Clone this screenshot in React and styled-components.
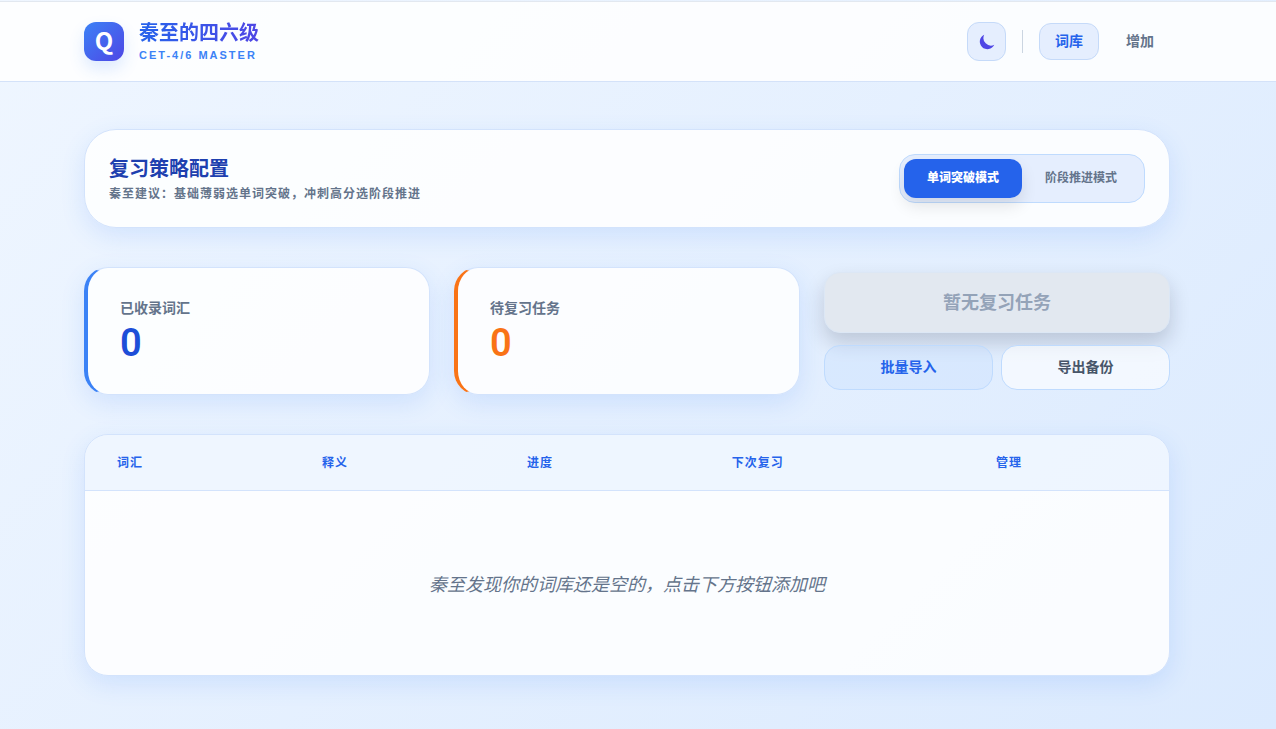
import React from "react";
import styled, { createGlobalStyle } from "styled-components";

const GlobalStyle = createGlobalStyle`
  *, *::before, *::after { box-sizing: border-box; }
  body {
    margin: 0;
    font-family: Roboto, "Noto Sans CJK SC", sans-serif;
    color: #1e293b;
    background: #e4effe;
  }
  button { font-family: inherit; cursor: pointer; }
  h1, h2, p { margin: 0; }
`;

const Page = styled.div`
  min-height: 100vh;
  padding-top: 1px;
  background: linear-gradient(135deg, #eff6ff, #dbeafe);
`;

const Container = styled.div`
  max-width: 1150px;
  margin: 0 auto;
  padding: 0 32px;
`;

const Gutter = styled.div`
  padding-right: 22px;
`;

const Header = styled.header`
  background: rgba(255, 255, 255, 0.85);
  border-top: 1px solid #e2e8f0;
  border-bottom: 1px solid #d4e2f9;
`;

const HeaderRow = styled(Container)`
  display: flex;
  align-items: center;
  justify-content: space-between;
  padding-top: 18px;
  padding-bottom: 18px;
`;

const Brand = styled.div`
  display: flex;
  align-items: center;
  gap: 15px;
`;

const Logo = styled.div`
  display: grid;
  place-items: center;
  width: 40px;
  height: 39px;
  padding-bottom: 4px;
  border-radius: 12px;
  background: linear-gradient(135deg, #3b82f6, #4f46e5);
  box-shadow: 0 8px 16px rgba(59, 130, 246, 0.16);
  color: #fff;
  font-family: "Noto Sans CJK SC", sans-serif;
  font-size: 24px;
  line-height: 24px;
  font-weight: 700;
`;

const BrandName = styled.h1`
  width: fit-content;
  font-size: 20px;
  line-height: 26px;
  font-weight: 700;
  background: linear-gradient(90deg, #2563eb, #4f46e5);
  background-clip: text;
  color: transparent;
`;

const BrandSub = styled.p`
  font-family: "Liberation Sans", "Noto Sans CJK SC", sans-serif;
  font-size: 11px;
  line-height: 15px;
  padding-top: 2px;
  font-weight: 700;
  letter-spacing: 2px;
  color: #3b82f6;
`;

const Nav = styled.nav`
  display: flex;
  align-items: center;
  gap: 16px;
`;

const ThemeButton = styled.button`
  display: grid;
  place-items: center;
  width: 39px;
  height: 39px;
  padding: 0;
  border: 1px solid #c5daf9;
  border-radius: 12px;
  background: #e5eefe;
  color: #4f46e5;
`;

const Divider = styled.span`
  width: 1px;
  height: 23px;
  background: #cbd5e1;
`;

const Tabs = styled.div`
  display: flex;
  gap: 11px;
`;

const TabButton = styled.button`
  height: 37px;
  padding: 0 15px 2px;
  border: 1px solid ${(p) => (p.$active ? "#c5daf9" : "transparent")};
  border-radius: 12px;
  background: ${(p) => (p.$active ? "#e5eefe" : "transparent")};
  color: ${(p) => (p.$active ? "#2563eb" : "#64748b")};
  font-size: 14px;
  line-height: 20px;
  font-weight: 700;
`;

const Main = styled(Container).attrs({ as: "main" })`
  display: grid;
  gap: 39px;
  padding-top: 47px;
  padding-bottom: 40px;
`;

const Card = styled.section`
  border: 1px solid #d3e3fc;
  border-radius: 24px;
  background: rgba(255, 255, 255, 0.85);
  box-shadow: 0 8px 24px rgba(59, 130, 246, 0.14);
`;

const StrategyCard = styled(Card)`
  display: flex;
  align-items: center;
  justify-content: space-between;
  padding: 24px;
  border-radius: 32px;
`;

const StrategyTitle = styled.h2`
  font-size: 20px;
  line-height: 28px;
  font-weight: 700;
  color: #1e40af;
`;

const StrategyHint = styled.p`
  font-size: 12px;
  line-height: 18px;
  padding-top: 2px;
  font-weight: 700;
  letter-spacing: 1px;
  color: #64748b;
`;

const Segment = styled.div`
  display: flex;
  padding: 4px;
  border: 1px solid #bfdbfe;
  border-radius: 16px;
  background: #e5eefe;
`;

const SegmentButton = styled.button`
  height: 39px;
  padding: 0 23px 2px;
  border: 0;
  border-radius: 12px;
  background: ${(p) => (p.$active ? "#2563eb" : "transparent")};
  box-shadow: ${(p) => (p.$active ? "0 8px 16px rgba(0, 0, 0, 0.1)" : "none")};
  color: ${(p) => (p.$active ? "#fff" : "#64748b")};
  font-size: 12px;
  line-height: 18px;
  font-weight: ${(p) => (p.$active ? 900 : 700)};
`;

const Stats = styled.div`
  display: grid;
  grid-template-columns: repeat(3, 1fr);
  gap: 24px;
`;

const StatCard = styled(Card)`
  padding: 29px 32px 28px;
  border-left: 4px solid ${(p) => p.$accent};
`;

const StatLabel = styled.p`
  font-size: 14px;
  line-height: 23px;
  font-weight: 700;
  color: #64748b;
`;

const StatValue = styled.p`
  font-size: 38px;
  line-height: 46px;
  font-weight: 600;
  color: ${(p) => p.$color};
`;

const Actions = styled.div`
  display: flex;
  flex-direction: column;
  justify-content: center;
  gap: 12px;
`;

const ReviewButton = styled.button`
  height: 61px;
  padding: 0 0 4px;
  border: 1px solid #dce7f5;
  border-radius: 16px;
  background: #e2e8f0;
  box-shadow: 0 10px 20px rgba(15, 23, 42, 0.18);
  color: #94a3b8;
  font-size: 18px;
  font-weight: 700;
`;

const ActionRow = styled.div`
  display: grid;
  grid-template-columns: 1fr 1fr;
  gap: 8px;
`;

const ActionButton = styled.button`
  height: 45px;
  padding: 0 0 4px;
  border: 1px solid #bfdbfe;
  border-radius: 16px;
  background: ${(p) => (p.$primary ? "rgba(191, 219, 254, 0.3)" : "rgba(255, 255, 255, 0.6)")};
  color: ${(p) => (p.$primary ? "#2563eb" : "#475569")};
  font-size: 14px;
  font-weight: 700;
`;

const TableCard = styled(Card)`
  overflow: hidden;
`;

const Table = styled.table`
  width: 100%;
  border-spacing: 0;
  text-align: left;
`;

const HeadCell = styled.th`
  padding: 19px 32px 17px;
  border-bottom: 1px solid #d3e3fc;
  background: rgba(219, 234, 254, 0.4);
  color: #2563eb;
  font-size: 12px;
  line-height: 19px;
  font-weight: 700;
  letter-spacing: 1px;
`;

const EmptyCell = styled.td`
  padding: 82px 32px 78px;
  color: #64748b;
  font-size: 18px;
  line-height: 24px;
  font-style: italic;
  text-align: center;
`;

const columns = ["词汇", "释义", "进度", "下次复习", "管理"];

const stats = [
  { label: "已收录词汇", value: 0, accent: "#3b82f6", color: "#1d4ed8" },
  { label: "待复习任务", value: 0, accent: "#f97316", color: "#f97316" },
];

function MoonIcon() {
  return (
    <svg width="16" height="16" viewBox="0 0 16 16" aria-hidden="true">
      <path d="M5.2.7A7.6 7.6 0 1 0 15.3 10.8 7.6 7.6 0 0 1 5.2.7Z" fill="currentColor" />
    </svg>
  );
}

export default function App() {
  return (
    <Page>
      <GlobalStyle />
      <Header>
        <Gutter>
          <HeaderRow>
            <Brand>
              <Logo>Q</Logo>
              <div>
                <BrandName>秦至的四六级</BrandName>
                <BrandSub>CET-4/6 MASTER</BrandSub>
              </div>
            </Brand>
            <Nav>
              <ThemeButton type="button" aria-label="切换主题">
                <MoonIcon />
              </ThemeButton>
              <Divider />
              <Tabs>
                <TabButton type="button" $active>词库</TabButton>
                <TabButton type="button">增加</TabButton>
              </Tabs>
            </Nav>
          </HeaderRow>
        </Gutter>
      </Header>
      <Gutter>
        <Main>
          <StrategyCard>
            <div>
              <StrategyTitle>复习策略配置</StrategyTitle>
              <StrategyHint>秦至建议：基础薄弱选单词突破，冲刺高分选阶段推进</StrategyHint>
            </div>
            <Segment>
              <SegmentButton type="button" $active>单词突破模式</SegmentButton>
              <SegmentButton type="button">阶段推进模式</SegmentButton>
            </Segment>
          </StrategyCard>
          <Stats>
            {stats.map((s) => (
              <StatCard key={s.label} $accent={s.accent}>
                <StatLabel>{s.label}</StatLabel>
                <StatValue $color={s.color}>{s.value}</StatValue>
              </StatCard>
            ))}
            <Actions>
              <ReviewButton type="button">暂无复习任务</ReviewButton>
              <ActionRow>
                <ActionButton type="button" $primary>批量导入</ActionButton>
                <ActionButton type="button">导出备份</ActionButton>
              </ActionRow>
            </Actions>
          </Stats>
          <TableCard>
            <Table>
              <thead>
                <tr>
                  {columns.map((c) => (
                    <HeadCell key={c} scope="col">{c}</HeadCell>
                  ))}
                </tr>
              </thead>
              <tbody>
                <tr>
                  <EmptyCell colSpan={5}>秦至发现你的词库还是空的，点击下方按钮添加吧</EmptyCell>
                </tr>
              </tbody>
            </Table>
          </TableCard>
        </Main>
      </Gutter>
    </Page>
  );
}
